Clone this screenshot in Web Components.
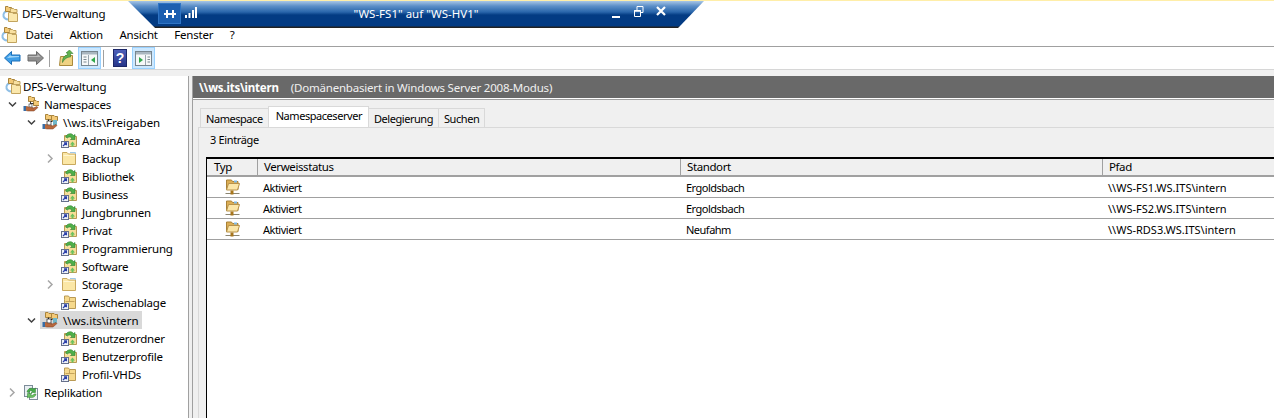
<!DOCTYPE html>
<html lang="de">
<head>
<meta charset="utf-8">
<title>DFS-Verwaltung</title>
<style>
html, body { margin: 0; height: 100%; overflow: hidden; background: #f0f0f0; }
body { font: 11.5px "Noto Sans", "Open Sans", "Liberation Sans", sans-serif; letter-spacing: -.2px; color: #000; }
</style>
</head>
<body>
<mmc-window>
  <mmc-titlebar slot="top" label="DFS-Verwaltung"></mmc-titlebar>
  <mmc-menubar slot="top"></mmc-menubar>
  <mmc-toolbar slot="top"></mmc-toolbar>
  <mmc-tree slot="left">
    <tree-node level="0" icon="dfs">DFS-Verwaltung</tree-node>
    <tree-node level="1" icon="ns" arrow="open">Namespaces</tree-node>
    <tree-node level="2" icon="root" arrow="open">\\ws.its\Freigaben</tree-node>
    <tree-node level="3" icon="link">AdminArea</tree-node>
    <tree-node level="3" icon="folder" arrow="closed">Backup</tree-node>
    <tree-node level="3" icon="link">Bibliothek</tree-node>
    <tree-node level="3" icon="link">Business</tree-node>
    <tree-node level="3" icon="link">Jungbrunnen</tree-node>
    <tree-node level="3" icon="link">Privat</tree-node>
    <tree-node level="3" icon="link">Programmierung</tree-node>
    <tree-node level="3" icon="link">Software</tree-node>
    <tree-node level="3" icon="folder" arrow="closed">Storage</tree-node>
    <tree-node level="3" icon="short">Zwischenablage</tree-node>
    <tree-node level="2" icon="root" arrow="open" selected>\\ws.its\intern</tree-node>
    <tree-node level="3" icon="link">Benutzerordner</tree-node>
    <tree-node level="3" icon="link">Benutzerprofile</tree-node>
    <tree-node level="3" icon="short">Profil-VHDs</tree-node>
    <tree-node level="1" icon="repl" arrow="closed">Replikation</tree-node>
  </mmc-tree>
  <mmc-details slot="right" name="\\ws.its\intern" note="(Domänenbasiert in Windows Server 2008-Modus)">
    <mmc-tabs active="1" tabs="Namespace|Namespaceserver|Delegierung|Suchen"></mmc-tabs>
    <mmc-list count="3 Einträge">
      <list-row head a="Typ" b="Verweisstatus" c="Standort" d="Pfad"></list-row>
      <list-row b="Aktiviert" c="Ergoldsbach" d="\\WS-FS1.WS.ITS\intern"></list-row>
      <list-row b="Aktiviert" c="Ergoldsbach" d="\\WS-FS2.WS.ITS\intern"></list-row>
      <list-row b="Aktiviert" c="Neufahm" d="\\WS-RDS3.WS.ITS\intern"></list-row>
    </mmc-list>
  </mmc-details>
</mmc-window>
<script>
const svg = (body, w = 16, h = 16) =>
  `<svg width="${w}" height="${h}" viewBox="0 0 ${w} ${h}" style="display:block;flex:none">${body}</svg>`;

const shortcut = `<rect x="0.5" y="9.5" width="7" height="6" fill="#eef2f8" stroke="#66708a"/><path d="M2 14l3-3M3 10.800h2.400v2.400" fill="none" stroke="#2b3fa8" stroke-width="1.3"/>`;
const smallFolder = (x, y) => `<path d="M${x}.5 ${y + 5}.5v-5h2.500l1 1h2.500v4z" fill="#f3c976" stroke="#a9843c"/>`;
const hand = `<path d="M2 10.500h2l3 1h3l-1 1 5-2 1 1-4 3.500h-6l-2-.5h-1z" fill="#b9683c" stroke="#7a3f20" stroke-width=".5"/><rect x="0.500" y="10" width="2.500" height="5" fill="#3a6ea5"/>`;

const ICONS = {
  folder: svg(`<path d="M1.500 14.500v-12h4.500l1.500 1.500h7v10.500z" fill="#fbe7a6" stroke="#c9a95e"/><path d="M2.500 5.500h11" stroke="#fff6d2"/><path d="M9 2.500h5.500v1.500" fill="none" stroke="#9fc8e6"/>`),
  link: svg(`<path d="M3.500 14.500v-11h4l1 1h7v10z" fill="#f6dd97" stroke="#b99a55"/><path d="M4.500 6h10" stroke="#fdf0c2"/><path d="M4.500 5c1.500-3.500 6-4.500 8-1.500l1.500-1v5h-4.500l1.500-1.300c-1.500-1.700-3.500-1.500-4.500-.2z" fill="#4fb04a" stroke="#2f7d2e" stroke-width=".6"/><path d="M9 12.500l2.500-3 2.500 3h-1.500v2h-2v-2z" fill="#6cc15f"/>` + shortcut),
  short: svg(`<path d="M3.500 5.500v-3.500h4l1 1.500h6v11h-11z" fill="#f6d98c" stroke="#b99a55"/><path d="M4.500 7.500h9M8.500 4v3" stroke="#c5a35b"/>` + shortcut),
  dfs: svg(`<path d="M7 13.500c-4 0-6-2.500-5.500-5 .4-2 2.500-3.500 5-3.500" fill="none" stroke="#8fbfe6" stroke-width="2"/>${smallFolder(3, 0)}<path d="M8.500 4.500v-2h3l1 1h2.500v3h-6.500z" fill="#f8e0a0" stroke="#bfa05a"/><path d="M6.500 15.500v-9h3.500l1 1h4.500v8z" fill="#fbe8ad" stroke="#c2a45f"/>`),
  ns: svg(smallFolder(5, 0) + smallFolder(10, 4) + `<path d="M7.500 5.500v4.500M7.500 7.500h3" stroke="#333"/><rect x="6" y="8" width="3" height="3" fill="#fff" stroke="#333" stroke-width=".6"/>` + hand),
  root: svg(smallFolder(3, 0) + smallFolder(9, 1) + `<rect x="11" y="6" width="4" height="5" fill="#6fb7c9"/><path d="M6.500 5.500v5M6.500 7.500h4" stroke="#222"/><rect x="5" y="7" width="4" height="4" fill="#fff" stroke="#222" stroke-width=".7"/>` + hand),
  repl: svg(`<rect x="1.500" y="1.500" width="8" height="11" fill="#e8eef2" stroke="#7d8c99"/><rect x="6.500" y="4.500" width="8" height="11" fill="#f4f7f9" stroke="#7d8c99"/><path d="M4 8c.5-3 4-5 7-3l1.500-1v4.500h-4.500l1.500-1.300c-1.500-1-3-.5-3.500 1.300z" fill="#49ad4a" stroke="#2c7f2f" stroke-width=".5"/><path d="M13 10c-.5 3-4 4.500-7 3l-1.500 1v-4.500h4.500l-1.500 1.300c1.500 1 3 .5 3.500-.8z" fill="#6ac062" stroke="#2c7f2f" stroke-width=".5"/>`),
  server: svg(`<path d="M2.500 10.500v-9.500h5l1 1.500h5.500v8z" fill="#dcae55" stroke="#a88136"/><path d="M2.500 11l2-6.500h11l-2 6.500z" fill="#fbe6a8" stroke="#b8924a"/><rect x="10" y="1.500" width="3" height="2" fill="#7fb9e6"/><path d="M1.500 14.500h14" stroke="#8a8470"/><rect x="6.500" y="11.500" width="3" height="4" fill="#a8761c"/>`),
  back: svg(`<path d="M0.500 8l7-6.500v3.500h8.500v6h-8.500v3.500z" fill="#3f9fe8" stroke="#1c6fb8"/><path d="M3 8l3.500-3.300v1.300h8.500v1z" fill="#9fd4f8"/>`, 17),
  fwd: svg(`<path d="M16.500 8l-7-6.500v3.500h-8.500v6h8.500v3.500z" fill="#8f8f8f" stroke="#6b6b6b"/><path d="M1.500 6h9v-2l3 3h-12z" fill="#bcbcbc"/>`, 17),
  up: svg(`<path d="M1.500 15.500l1-9h4l1.500-1h6.500v10z" fill="#efd283" stroke="#aa8a3c"/><path d="M4.500 12c0-4 1.500-6.500 5-7v-2l-1.500 0 3.500-3 3.500 3.500h-2.500v3.500c-3 0-6 1.500-8 5.500z" fill="#5fb24f" stroke="#397f31" stroke-width=".6"/>`),
  paneL: svg(`<rect x="0.500" y="1.500" width="16" height="14" fill="#f6f8f9" stroke="#77858f"/><rect x="1" y="2" width="15" height="2.500" fill="#a9b6c0"/><path d="M7.500 5v10" stroke="#9aa7b0"/><path d="M2.500 7h3M2.500 9.500h3M2.500 12h3" stroke="#7b8891"/><path d="M14 7v6l-4-3z" fill="#2fa84a"/>`, 17),
  paneR: svg(`<rect x="0.500" y="1.500" width="16" height="14" fill="#f6f8f9" stroke="#77858f"/><rect x="1" y="2" width="15" height="2.500" fill="#a9b6c0"/><path d="M10.500 5v10" stroke="#9aa7b0"/><path d="M12.500 7h2.500M12.500 9.500h2.500M12.500 12h2.500" stroke="#7b8891"/><path d="M4 7v6l4-3z" fill="#2fa84a"/>`, 17),
  help: `<span style="display:grid;place-items:center;width:12px;height:16px;background:linear-gradient(#4d5fb8,#27368a);border:1px solid #1c2768;color:#fff;font:bold 14px 'Liberation Sans',sans-serif">?</span>`,
  chevOpen: svg(`<path d="M2 3.500l3.500 3.500 3.500-3.500" fill="none" stroke="#404040" stroke-width="1.500"/>`, 11, 10),
  chevClosed: svg(`<path d="M3 1.500l4 4-4 4" fill="none" stroke="#a6a6a6" stroke-width="1.500"/>`, 11, 11)
};

function define(tag, html) {
  customElements.define(tag, class extends HTMLElement {
    constructor() {
      super();
      this.attachShadow({ mode: 'open' });
    }
    connectedCallback() {
      this.shadowRoot.innerHTML = typeof html === 'function' ? html(this) : html;
    }
  });
}

define('mmc-window', `
  <style>
    :host { display: flex; flex-direction: column; width: 1274px; height: 418px; overflow: hidden; }
    main { display: grid; grid-template-columns: 189px 1fr; column-gap: 3px; flex: 1; min-height: 0; }
  </style>
  <slot name="top"></slot>
  <main><slot name="left"></slot><slot name="right"></slot></main>
`);

define('mmc-titlebar', el => `
  <style>
    :host { display: flex; align-items: center; height: 23px; box-sizing: border-box; position: relative;
      background: #fff; border-top: 1px solid #ffeea8; padding: 3px 0 0 2px; }
    .bar { position: absolute; left: 128px; top: 0; width: 576px; height: 27px; z-index: 2; color: #fff; letter-spacing: 0;
      clip-path: polygon(0 0, 100% 0, 95.5% 100%, 4.7% 100%);
      background: linear-gradient(#a8c6e6 0, #5d8fc8 5px, #2a66ab 11px, #033b83 14px, #033b83 25px, #222 26px); }
    .pin { position: absolute; left: 30px; top: 2px; width: 21px; height: 19px; background: #1c5fb0; border: 1px solid #2f74c4; display: grid; place-items: center; }
    .sig { position: absolute; left: 56px; top: 5px; }
    .t { position: absolute; left: 0; right: 0; top: 3px; text-align: center; font-size: 11.500px; line-height: 20px; }
    .ctl { position: absolute; top: 4px; }
  </style>
  ${ICONS.dfs}<span style="margin-left:4px">${el.getAttribute('label')}</span>
  <div class="bar">
    <span class="pin">${svg('<path d="M1 6h12M4 2v8M10 2v8" stroke="#fff" stroke-width="2" fill="none"/>', 14, 12)}</span>
    <span class="sig">${svg('<path d="M1 12h2v-3h-2zM4.500 12h2v-5h-2zM8 12h2v-8h-2zM11 12h2v-11h-2z" fill="#fff"/>', 14, 13)}</span>
    <span class="t">"WS-FS1" auf "WS-HV1"</span>
    <span class="ctl" style="left:482px;top:5px">${svg('<path d="M2 11h8" stroke="#fff" stroke-width="2"/>', 12, 13)}</span>
    <span class="ctl" style="left:505px;top:4px">${svg('<path d="M1.500 5.500h6v6h-6zM4 5v-3.500h6v6h-2.500" fill="none" stroke="#fff"/><path d="M1 6h7" stroke="#fff" stroke-width="1.500"/>', 12, 13)}</span>
    <span class="ctl" style="left:527px;top:4px">${svg('<path d="M2 2l8 8M10 2l-8 8" stroke="#fff" stroke-width="2.200"/>', 12, 12)}</span>
  </div>
`);

define('mmc-menubar', `
  <style>
    :host { display: flex; align-items: center; gap: 16.500px; height: 24px; box-sizing: border-box; background: #fff; border-bottom: 1px solid #a0a0a0; padding-left: 1px; }
    span:first-of-type { margin-left: -8px; }
  </style>
  ${ICONS.dfs}<span>Datei</span><span>Aktion</span><span>Ansicht</span><span>Fenster</span><span>?</span>
`);

define('mmc-toolbar', `
  <style>
    :host { display: flex; align-items: center; height: 23px; box-sizing: border-box; background: #fff; border-bottom: 1px solid #d6d6d6; padding-left: 4px; margin-bottom: 6px; }
    i { width: 1px; height: 17px; background: #a0a0a0; }
    b { display: grid; place-items: center; width: 21px; height: 20px; background: #cce8ff; border: 1px solid #99d1ff; }
  </style>
  ${ICONS.back}<span style="width:6px"></span>${ICONS.fwd}
  <i style="margin:0 8px 0 5px"></i>${ICONS.up}<span style="width:4px"></span>
  <b>${ICONS.paneL}</b><i style="margin:0 9px 0 2px"></i>${ICONS.help}
  <span style="width:5px"></span><b>${ICONS.paneR}</b>
`);

define('mmc-tree', `
  <style>
    :host { display: block; background: #fff; padding-top: 1px; border-right: 1px solid #a0a0a0; overflow: hidden; }
  </style>
  <slot></slot>
`);

define('tree-node', el => {
  const level = +el.getAttribute('level');
  const arrow = el.getAttribute('arrow');
  const chev = arrow === 'open' ? ICONS.chevOpen : arrow === 'closed' ? ICONS.chevClosed : '';
  const sel = el.hasAttribute('selected');
  return `
  <style>
    :host { display: flex; align-items: center; height: 18px; padding-left: ${level === 0 ? 4 : 19 * level - 13}px; ${level === 2 ? 'letter-spacing: 0;' : ''} }
    .c { width: ${level === 0 ? 0 : 17}px; height: 11px; flex: none; display: flex; align-items: center; padding-left: 1px; box-sizing: border-box; }
    .row { display: flex; align-items: center; gap: ${level === 0 ? 2 : 5}px; height: 18px; padding-right: 1px; ${sel ? 'background:#d9d9d9; padding: 0 3px 0 2px; margin-left: -2px;' : ''} }
  </style>
  <span class="c">${chev}</span>
  <span class="row">${ICONS[el.getAttribute('icon')]}<span><slot></slot></span></span>`;
});

define('mmc-details', el => `
  <style>
    :host { display: flex; flex-direction: column; min-width: 0; background: #f0f0f0; border-left: 1px solid #a0a0a0; }
    header { height: 23px; flex: none; box-sizing: border-box; background: #696969; color: #fff; display: flex; align-items: center; padding-left: 6px; gap: 12px; border-bottom: 1px solid #fff; }
    .note { color: #f0f0f0; }
    .body { flex: 1; min-height: 0; display: flex; flex-direction: column; padding: 6px 0 0 5px; background: #f0f0f0; border-top: 1px solid #a0a0a0; }
  </style>
  <header><strong>${el.getAttribute('name')}</strong><span class="note">${el.getAttribute('note')}</span></header>
  <div class="body"><slot></slot></div>
`);

define('mmc-tabs', el => {
  const active = +el.getAttribute('active');
  const tabs = el.getAttribute('tabs').split('|').map((t, i) =>
    `<span class="${i === active ? 'on' : ''}">${t}</span>`).join('');
  return `
  <style>
    :host { display: flex; align-items: flex-end; height: 21px; padding-left: 2px; font-size: 11px; letter-spacing: -.45px; }
    span { height: 18px; line-height: 20px; padding: 0 5px; background: #f0f0f0; border: 1px solid #d9d9d9; border-bottom: 0; margin-right: -1px; }
    .on { height: 20px; line-height: 18px; padding: 0 6px 0 7px; background: #fff; position: relative; z-index: 1; }
  </style>${tabs}`;
});

define('mmc-list', el => `
  <style>
    :host { display: flex; flex-direction: column; flex: 1; min-height: 0; border-top: 1px solid #d9d9d9; border-left: 1px solid #d9d9d9; padding: 0 0 0 7px; }
    .count { height: 29px; box-sizing: border-box; padding: 4px 0 0 4px; font-size: 11px; letter-spacing: -.35px; flex: none; }
    .box { flex: 1; background: #fff; border-left: 1px solid #000; border-top: 2px solid #000; min-height: 0; }
  </style>
  <div class="count">${el.getAttribute('count')}</div>
  <div class="box"><slot></slot></div>
`);

define('list-row', el => {
  const head = el.hasAttribute('head');
  const cell = k => `<span class="${k}">${el.getAttribute(k) || ''}</span>`;
  return `
  <style>
    :host { display: grid; grid-template-columns: 50px 423px 422px 1fr; align-items: center; box-sizing: border-box;
      height: ${head ? 18 : 21}px; border-bottom: ${head ? '2px' : '1px'} solid #a0a0a0;
      ${head ? 'background:#f0f0f0; letter-spacing: -.4px;' : 'font-size: 11px; letter-spacing: -.5px;'} }
    span { padding-left: 6px; white-space: nowrap; ${head ? 'border-left: 1px solid #a0a0a0; line-height: 16px;' : ''} }
    span:first-of-type { padding-left: ${head ? 7 : 17}px; border-left: 0; }
    .d { ${head ? '' : 'letter-spacing: 0;'} }
  </style>
  ${head ? cell('a') : `<span>${ICONS.server}</span>`}${cell('b')}${cell('c')}${cell('d')}`;
});
</script>
</body>
</html>
